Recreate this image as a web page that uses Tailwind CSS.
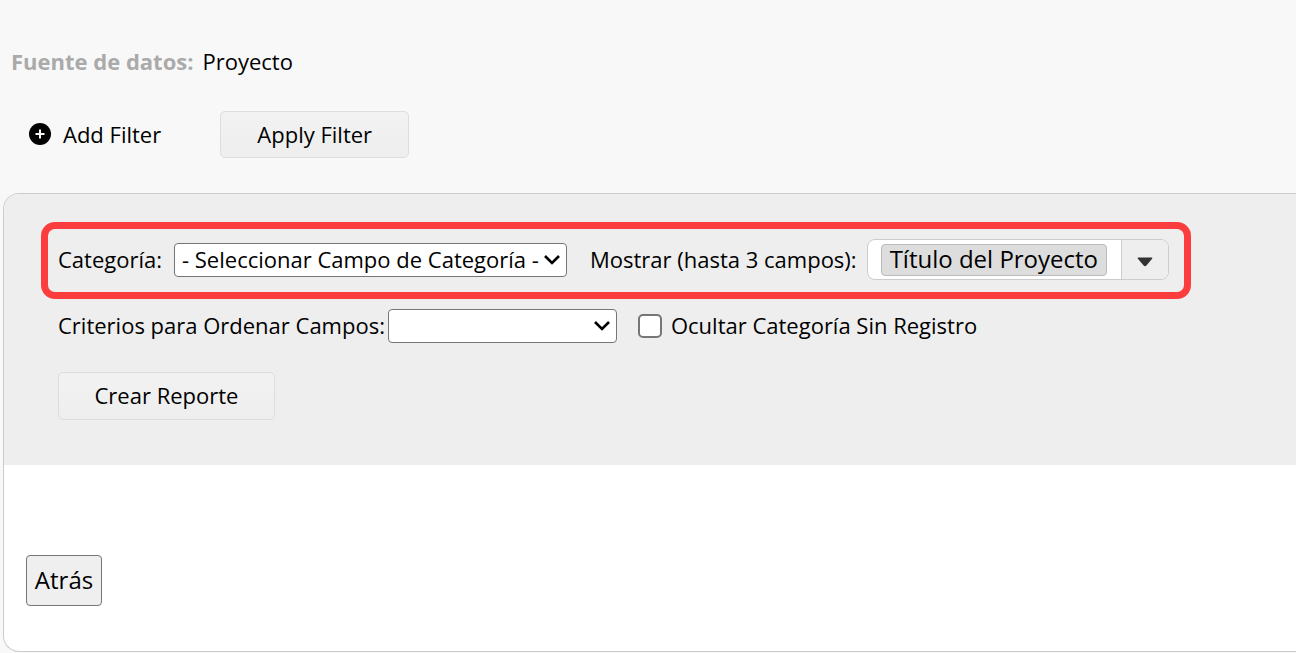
<!DOCTYPE html>
<html lang="es">
<head>
  <meta charset="UTF-8" />
  <title>Reporte por Categoría</title>
  <script src="https://cdn.jsdelivr.net/npm/@tailwindcss/browser@4"></script>
</head>
<body class="bg-[#f8f8f8] text-black text-[22px] leading-[30px] font-['Open_Sans','Noto_Sans',sans-serif]">

  <!-- Data source -->
  <div class="flex gap-[9px] pt-[46px] pl-[11px]">
    <span class="font-bold text-[#aaa]">Fuente de datos:</span>
    <span>Proyecto</span>
  </div>

  <!-- Filters -->
  <div class="flex items-center gap-[59px] mt-[35px] pl-[29px]">
    <a href="#" class="flex items-center gap-3 pb-0.5">
      <svg class="w-[22px] h-[22px]" viewBox="0 0 22 22">
        <circle cx="11" cy="11" r="11" fill="#000" />
        <path d="M11 6.5v9M6.5 11h9" stroke="#f8f8f8" stroke-width="2" />
      </svg>
      Add Filter
    </a>
    <button type="button" class="h-[47px] w-[189px] pb-0.5 rounded-[5px] border border-[#ddd] bg-linear-to-b from-[#f2f2f2] to-[#eee]">Apply Filter</button>
  </div>

  <main class="mt-[35px] ml-[3px] border border-r-0 border-[#ccc] rounded-l-2xl bg-white overflow-hidden">
    <form class="bg-[#eee] pt-7 pb-[45px] pl-[37px]">

      <!-- Highlighted row -->
      <div class="flex w-fit items-center h-[77px] border-[7px] border-[#fb3d3d] rounded-[14px] pl-[10px] pr-[15px] pb-0.5 whitespace-nowrap">
        <label for="category" class="pb-0.5">Categoría:</label>
        <div class="relative ml-3">
          <select id="category" class="appearance-none block w-[393px] h-[34px] pl-[7px] pb-0.5 bg-white border border-[#767676] rounded">
            <option>- Seleccionar Campo de Categoría -</option>
          </select>
          <svg class="absolute right-[7px] top-[11px] w-4 h-3 pointer-events-none" viewBox="0 0 16 12" fill="none" stroke="#000" stroke-width="2.6">
            <path d="M1 2l7 7 7-7" />
          </svg>
        </div>

        <label for="fields" class="ml-[23px] pb-0.5">Mostrar (hasta 3 campos):</label>
        <div class="flex ml-[10px] w-[302px] h-[41px] border border-[#ccc] rounded-lg bg-white overflow-hidden">
          <div class="flex flex-1 items-center pl-[13px]">
            <span class="flex items-center h-8 px-2 pb-0.5 text-[24px] bg-[#ddd] border border-[#bbb] rounded">Título del Proyecto</span>
          </div>
          <button type="button" id="fields" aria-label="Mostrar campos" class="flex items-center justify-center w-[47px] bg-[#eee] border-l border-[#ccc]">
            <svg class="w-4 h-[10px] mt-1" viewBox="0 0 16 10">
              <path d="M1.5 0.5h13q1.5 0 .6 1.3L9.4 8.6q-1.4 1.4-2.8 0L.9 1.8Q0 .5 1.5 .5z" fill="#333" />
            </svg>
          </button>
        </div>
      </div>

      <div class="flex items-center mt-[10px] pl-[17px]">
        <label for="order" class="pb-0.5">Criterios para Ordenar Campos:</label>
        <div class="relative ml-[3px]">
          <select id="order" class="appearance-none block w-[229px] h-[34px] pl-[7px] bg-white border border-[#767676] rounded">
            <option></option>
          </select>
          <svg class="absolute right-[7px] top-[11px] w-4 h-3 pointer-events-none" viewBox="0 0 16 12" fill="none" stroke="#000" stroke-width="2.6">
            <path d="M1 2l7 7 7-7" />
          </svg>
        </div>
        <input type="checkbox" id="hideEmpty" class="appearance-none ml-[21px] w-6 h-6 bg-white border-2 border-[#767676] rounded-[5px]" />
        <label for="hideEmpty" class="ml-[9px] pb-0.5">Ocultar Categoría Sin Registro</label>
      </div>

      <div class="mt-[29px] pl-[17px]">
        <button type="button" class="block h-12 w-[217px] pb-0.5 rounded-[5px] border border-[#ddd] bg-linear-to-b from-[#f2f2f2] to-[#eee]">Crear Reporte</button>
      </div>
    </form>

    <div class="pt-[90px] pb-[45px] pl-[22px]">
      <button type="button" class="block h-[51px] w-[76px] pb-0.5 text-[24px] bg-[#efefef] border border-[#767676] rounded">Atrás</button>
    </div>
  </main>

</body>
</html>
